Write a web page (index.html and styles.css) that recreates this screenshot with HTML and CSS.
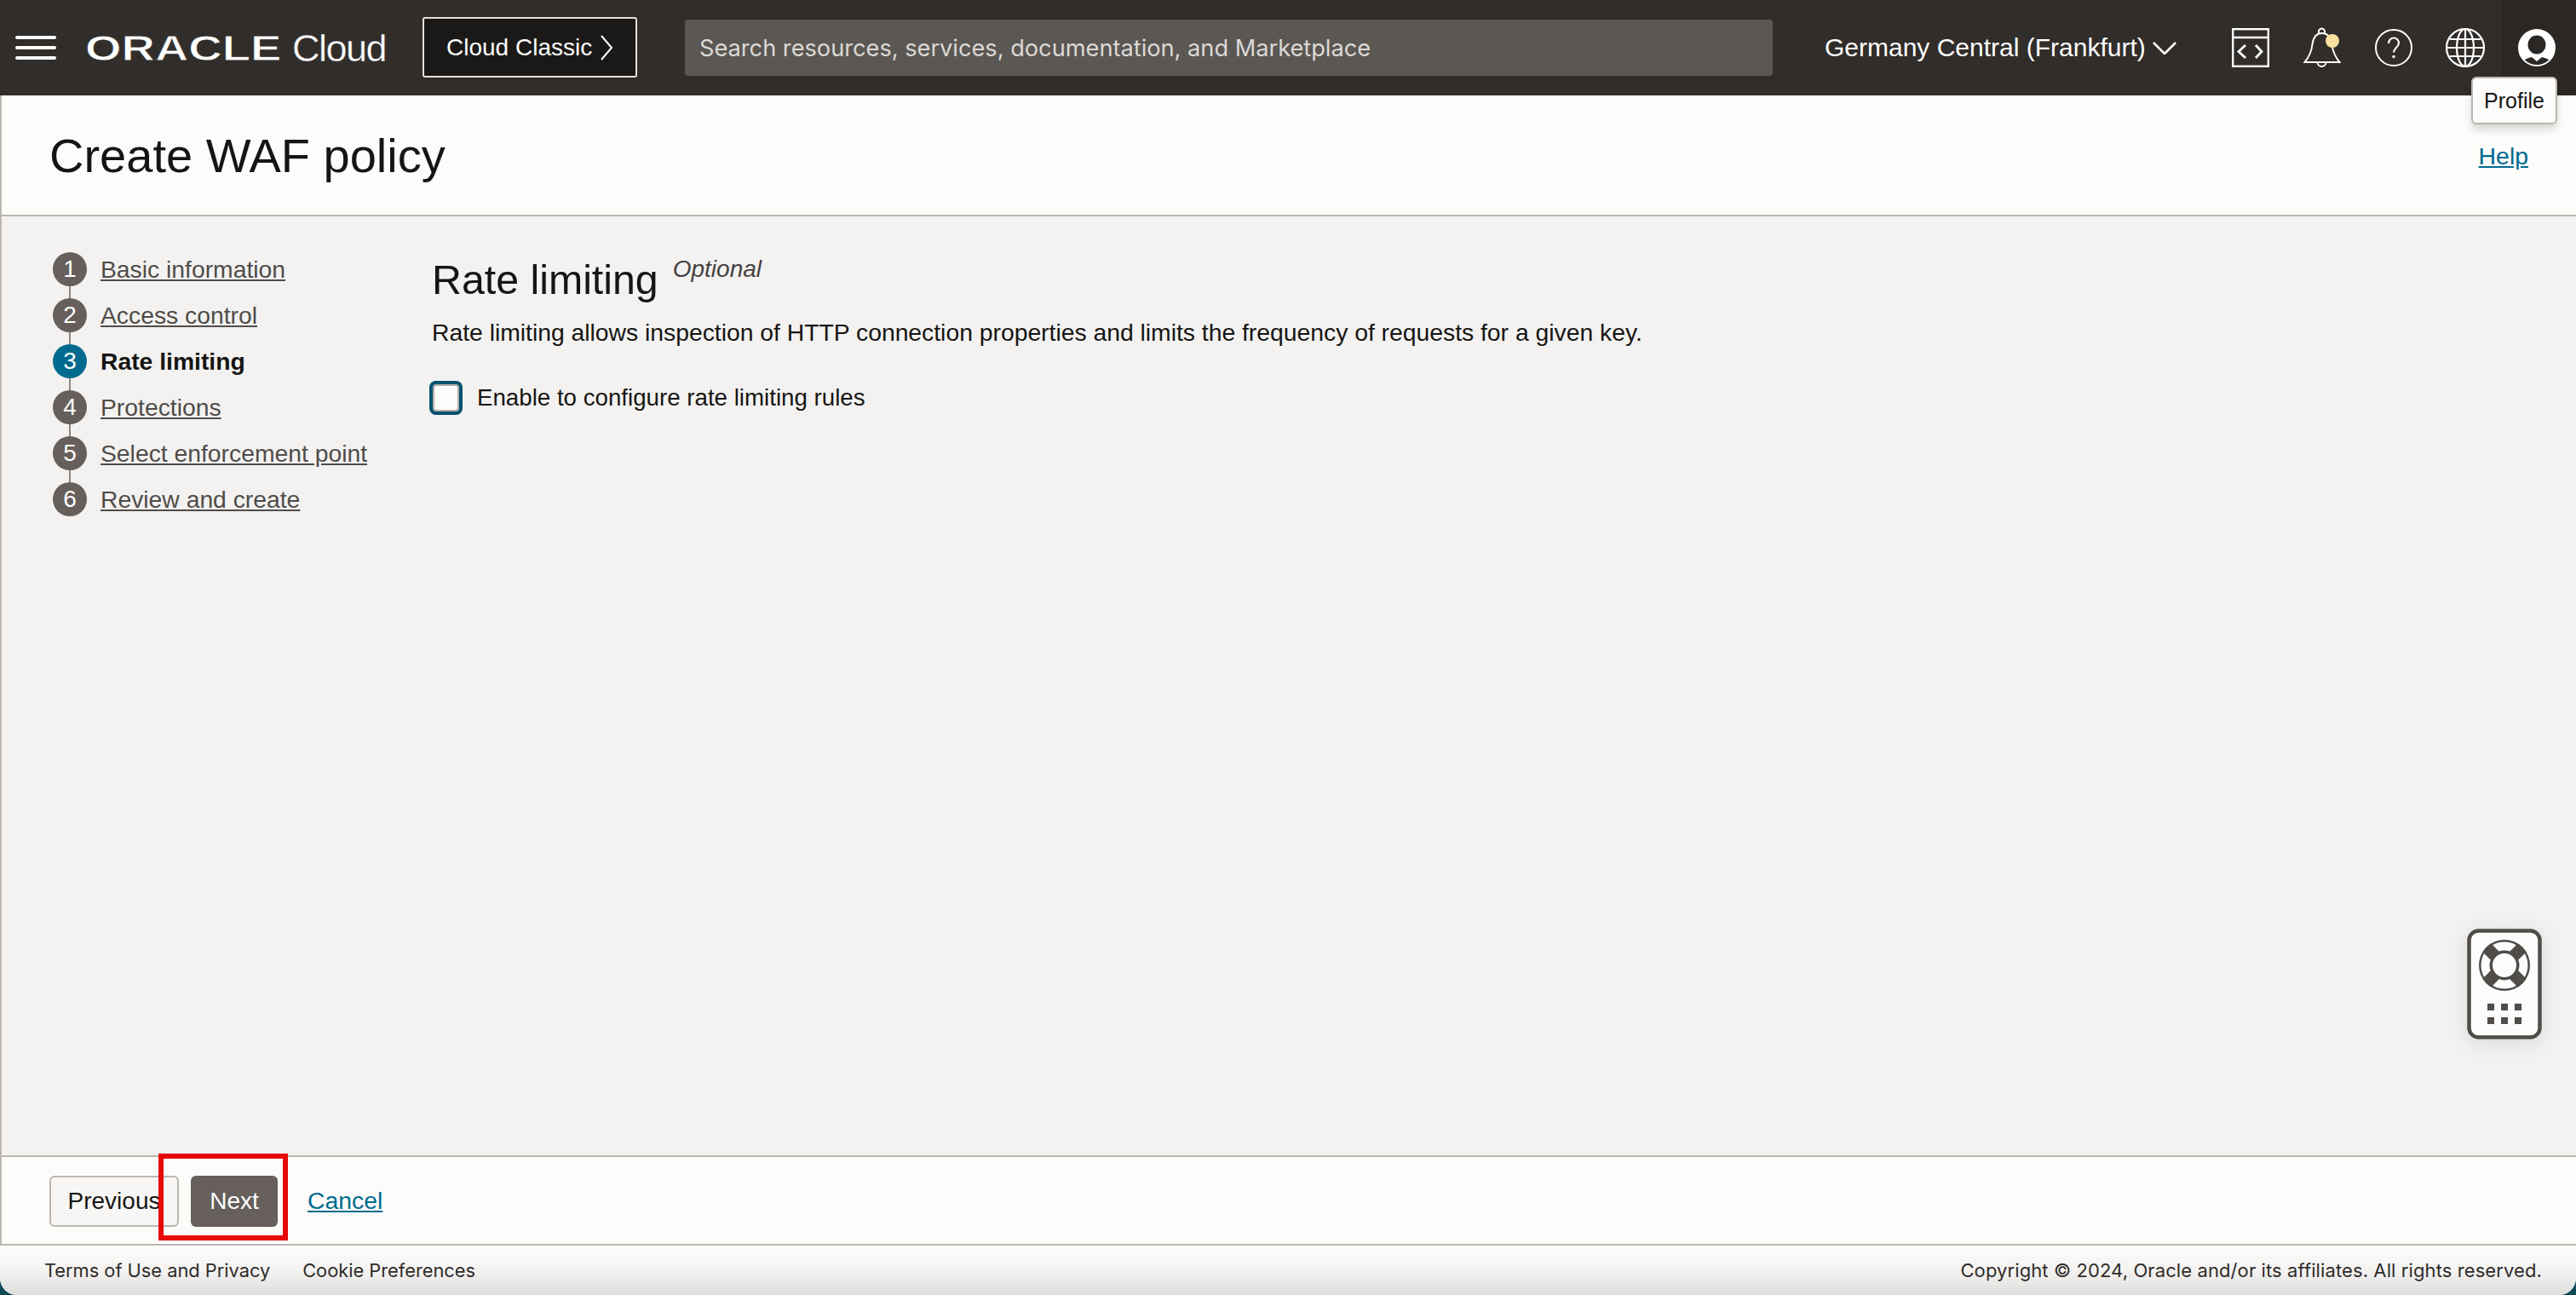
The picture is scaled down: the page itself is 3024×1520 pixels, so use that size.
FILE: index.html
```html
<!DOCTYPE html>
<html lang="en">
<head>
<meta charset="utf-8">
<title>Create WAF policy</title>
<link rel="stylesheet" href="styles.css">
</head>
<body>
<div class="app">
  <header class="topbar">
    <button class="burger" aria-label="Menu"><span></span><span></span><span></span></button>
    <div class="brand"><span class="brand-oracle">ORACLE</span><span class="brand-cloud">Cloud</span></div>
    <a class="classic">Cloud Classic
      <svg class="classic-chev" viewBox="0 0 16 32"><path d="M2 2l12 14L2 30" fill="none" stroke="#fff" stroke-width="2"/></svg>
    </a>
    <div class="search">Search resources, services, documentation, and Marketplace</div>
    <div class="region">Germany Central (Frankfurt)
      <svg class="region-chev" viewBox="0 0 30 16"><path d="M1 1l14 14L29 1" fill="none" stroke="#fff" stroke-width="2.800"/></svg>
    </div>
    <div class="icons">
      <span class="icon-cell">
        <svg width="44" height="46" viewBox="0 0 44 46" fill="none" stroke="#fff" stroke-width="2.400"><rect x="1.200" y="1.200" width="41.600" height="43.600"/><path d="M1 11h42"/><path d="M16 20l-8 7.500 8 7.500M28 20l7 7.500-7 7.500" stroke-width="2.800"/></svg>
      </span>
      <span class="icon-cell">
        <svg width="44" height="48" viewBox="0 0 44 48" fill="none"><path d="M18.500 7a3.500 3.500 0 1 1 6 0M21.500 7c-7 0-10 6-11 13-1 9-4 15-9 21h41c-5-6-8-12-9-21-1-7-4-13-12-13z" stroke="#fff" stroke-width="2"/><path d="M16.500 41a5 5 0 0 0 10 0" stroke="#fff" stroke-width="2"/><circle cx="34" cy="16" r="8" fill="#f9e1a0"/></svg>
      </span>
      <span class="icon-cell">
        <svg width="44" height="44" viewBox="0 0 44 44" fill="none" stroke="#fff" stroke-width="2"><circle cx="22" cy="22" r="21"/><path d="M16 17c0-4 3-6.500 6-6.500s6 2.500 6 6c0 5-6 5.500-6 11" stroke-width="2.200"/><circle cx="22" cy="32.500" r="1.700" fill="#fff" stroke="none"/></svg>
      </span>
      <span class="icon-cell">
        <svg width="46" height="46" viewBox="0 0 46 46" fill="none" stroke="#fff" stroke-width="2.200"><circle cx="23" cy="23" r="22"/><ellipse cx="23" cy="23" rx="10" ry="22"/><path d="M23 1v44M2 23h42M5 13h36M5 33h36"/></svg>
      </span>
      <span class="icon-cell icon-active">
        <svg width="44" height="44" viewBox="0 0 44 44"><defs><clipPath id="pc"><circle cx="22" cy="22" r="20"/></clipPath></defs><circle cx="22" cy="22" r="22" fill="#fff"/><g clip-path="url(#pc)" fill="#2a2724"><ellipse cx="22" cy="18.500" rx="10.500" ry="11"/><path d="M3 46c0-9 8-12 13-13l6 5 6-5c5 1 13 4 13 13z"/></g></svg>
      </span>
    </div>
    <div class="tooltip">Profile</div>
  </header>

  <main class="page">
    <div class="page-head">
      <h1 class="page-title">Create WAF policy</h1>
      <a class="link help">Help</a>
    </div>
    <div class="wizard">
      <ol class="steps">
        <li class="step"><span class="num">1</span><a class="step-link">Basic information</a></li>
        <li class="step"><span class="num">2</span><a class="step-link">Access control</a></li>
        <li class="step step-current"><span class="num">3</span><a class="step-link">Rate limiting</a></li>
        <li class="step"><span class="num">4</span><a class="step-link">Protections</a></li>
        <li class="step"><span class="num">5</span><a class="step-link">Select enforcement point</a></li>
        <li class="step"><span class="num">6</span><a class="step-link">Review and create</a></li>
      </ol>
      <section class="panel">
        <div class="panel-head"><h2 class="panel-title">Rate limiting</h2><em class="optional">Optional</em></div>
        <p class="panel-desc">Rate limiting allows inspection of HTTP connection properties and limits the frequency of requests for a given key.</p>
        <label class="check"><span class="box"></span><span>Enable to configure rate limiting rules</span></label>
      </section>
    </div>
    <div class="helper">
      <svg width="88" height="130" viewBox="0 0 88 130" fill="none">
        <defs><clipPath id="ring"><circle cx="44" cy="43" r="30"/></clipPath></defs>
        <rect x="2.500" y="2.500" width="83" height="125" rx="11" fill="#fcfcfb" stroke="#4f4c49" stroke-width="4.500"/>
        <circle cx="44" cy="43" r="30" fill="#4f4c49"/>
        <circle cx="44" cy="43" r="22.500" stroke="#fcfcfb" stroke-width="10"/>
        <g clip-path="url(#ring)"><path d="M20 19l16 16M68 19L52 35M20 67l16-16M68 67L52 51" stroke="#4f4c49" stroke-width="14"/></g>
        <circle cx="44" cy="43" r="15" fill="#fcfcfb" stroke="#4f4c49" stroke-width="2"/>
        <path d="M24 88h8v8h-8zM40 88h8v8h-8zM56 88h8v8h-8zM24 104h8v8h-8zM40 104h8v8h-8zM56 104h8v8h-8z" fill="#4f4c49"/>
      </svg>
    </div>
    <div class="actions">
      <button class="btn btn-plain">Previous</button>
      <button class="btn btn-primary">Next</button>
      <a class="link cancel">Cancel</a>
      <span class="highlight"></span>
    </div>
  </main>

  <footer class="foot">
    <div class="foot-links"><a>Terms of Use and Privacy</a><a>Cookie Preferences</a></div>
    <div class="foot-copy">Copyright © 2024, Oracle and/or its affiliates. All rights reserved.</div>
  </footer>
</div>
</body>
</html>
```
FILE: styles.css
```css
* { box-sizing: border-box; }
html, body { margin: 0; height: 100%; }
body { background: #0f4a55; font-family: "Liberation Sans", Arial, sans-serif; overflow: hidden; }
a { cursor: pointer; }
.app { height: 1520px; display: flex; flex-direction: column; border-radius: 0 0 20px 20px; overflow: hidden; background: #f3f2f1; }

.topbar { position: relative; height: 112px; flex: none; background: #312d2a; display: flex; align-items: center; color: #fff; padding-left: 18px; }
.burger { width: 48px; height: 28px; padding: 0; background: none; border: 0; display: flex; flex-direction: column; justify-content: space-between; margin-top: -1px; }
.burger span { display: block; height: 4px; border-radius: 2px; background: #fff; }
.brand { margin-left: 34px; width: 362px; display: flex; align-items: center; height: 40px; }
.brand-oracle { font-size: 42px; font-weight: 700; color: #fff; display: inline-block; transform: scaleX(1.3); transform-origin: left center; width: 243px; -webkit-text-stroke: .8px #312d2a; margin-top: 2px; }
.brand-cloud { font-size: 45px; letter-spacing: -1.500px; font-weight: 400; margin-top: 2px; -webkit-text-stroke: .4px #312d2a; }
.classic { width: 252px; height: 71px; margin-left: 34px; background: #1b1917; border: 2px solid #e4e1dd; border-radius: 3px; display: flex; align-items: center; padding-left: 26px; font-size: 28px; color: #fff; margin-top: -1px; flex: none; }
.classic-chev { width: 16px; height: 32px; margin-left: 9px; }
.search { margin-left: 56px; width: 1277px; height: 66px; flex: none; background: #5b5753; border-radius: 4px; color: #dcd9d6; font-family: Inter, "Liberation Sans", sans-serif; font-size: 27.200px; display: flex; align-items: center; padding-left: 17px; }
.region { margin-left: 61px; font-size: 30px; display: flex; align-items: center; white-space: nowrap; }
.region-chev { width: 28px; height: 15px; margin-left: 8px; }
.icons { position: absolute; right: 0; top: 0; bottom: 0; display: flex; align-items: center; }
.icon-cell { width: 84px; height: 112px; display: flex; align-items: center; justify-content: center; }
.icon-active { width: 88px; background: #2a2724; padding-right: 4px; }
.tooltip { position: absolute; left: 2901px; top: 90px; width: 101px; height: 56px; background: #fcfcfb; border: 2px solid #bcb6b1; border-radius: 6px; color: #161513; font-size: 25px; display: flex; align-items: center; justify-content: center; box-shadow: 0 6px 10px rgba(0,0,0,.15); z-index: 3; }

.page { position: relative; flex: 1; display: flex; flex-direction: column; border-left: 2px solid #bcb6b1; min-height: 0; }
.page-head { height: 142px; flex: none; background: #fcfcfa; border-bottom: 2px solid #bcb6b1; display: flex; justify-content: space-between; align-items: center; padding: 0 56px 0 56px; }
.page-title { margin: 0; font-size: 56px; font-weight: 400; color: #161513; }
.link { color: #006b8f; text-decoration: underline; font-size: 28.400px; }
.help { margin-top: 2px; }
.wizard { flex: 1; display: flex; padding: 42px 0 0 60px; min-height: 0; }
.steps { list-style: none; margin: 0; padding: 0; width: 445px; flex: none; }
.step { position: relative; height: 54px; display: flex; gap: 16px; font-size: 28.300px; color: #4f4c49; }
.step:not(:last-child)::after { content: ""; position: absolute; left: 19px; top: 36px; width: 2px; height: 22px; background: #8a8580; }
.num { width: 40px; height: 40px; flex: none; border-radius: 50%; background: #665f5b; color: #fff; display: flex; align-items: center; justify-content: center; position: relative; z-index: 1; font-size: 28px; }
.step-link { text-decoration: underline; line-height: 41px; }
.step-current .num { background: #006b8f; }
.step-current .step-link { color: #161513; font-weight: 700; text-decoration: none; }
.panel { color: #161513; padding-top: 4px; }
.panel-head { display: flex; align-items: flex-start; gap: 17px; }
.panel-title { margin: 0; font-size: 48.300px; font-weight: 400; line-height: 56px; }
.optional { font-size: 28px; color: #46423f; line-height: 32px; }
.panel-desc { margin: 16px 0 0; font-size: 28.300px; line-height: 36px; }
.check { display: flex; align-items: center; gap: 17px; font-size: 27.700px; margin: 39px 0 0 -3px; }
.box { width: 39px; height: 40px; background: #fcfcfb; border-radius: 8px; box-shadow: inset 0 0 0 4px #04536f, inset 0 0 0 6px #b5afaa; }
.helper { position: absolute; right: 40px; top: 978px; width: 88px; height: 130px; display: flex; border-radius: 12px; box-shadow: 0 4px 24px rgba(0,0,0,.1); }
.actions { position: relative; height: 104px; flex: none; background: #fcfcfa; border-top: 2px solid #bcb6b1; display: flex; align-items: center; padding-left: 56px; }
.btn { height: 60px; border-radius: 6px; font: inherit; font-size: 28px; padding: 0; margin-top: 1px; }
.btn-plain { width: 152px; background: #f7f6f5; border: 2px solid #bcb6b1; color: #161513; }
.btn-primary { width: 102px; margin-left: 14px; background: #665f5b; border: 0; color: #fff; }
.cancel { margin-left: 35px; }
.highlight { position: absolute; left: 184px; top: -4px; width: 152px; height: 102px; border: 6px solid #e80808; }

.foot { height: 60px; flex: none; border-top: 2px solid #bcb6b1; background: linear-gradient(#fcfcfb, #f4f3f2 50%, #dededd); display: flex; justify-content: space-between; align-items: center; padding: 0 40px 0 52px; font-family: Inter, "Liberation Sans", sans-serif; font-size: 21.800px; color: #2f2c2a; }
.foot-links { display: flex; gap: 38px; }
.foot-copy { font-size: 22px; letter-spacing: .1px; }
```
